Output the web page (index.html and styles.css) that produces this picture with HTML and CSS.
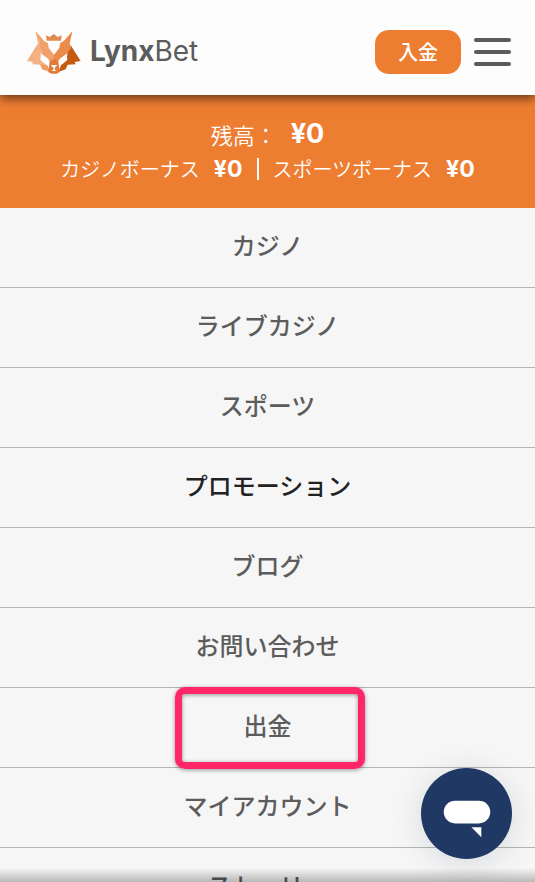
FILE: index.html
```html
<!DOCTYPE html>
<html lang="ja">
<head>
  <meta charset="UTF-8">
  <meta name="viewport" content="width=device-width, initial-scale=1.0">
  <title>LynxBet</title>
  <link rel="stylesheet" href="styles.css">
</head>
<body>
  <header class="header">
    <a class="logo" href="#">
      <svg class="logo-mark" viewBox="35 28 162 132" aria-hidden="true">
        <!-- crown -->
        <path fill="#e58a4e" d="M92 44l11 5 12-9 12 9 12-5-2 16H94z"/>
        <!-- cheeks -->
        <path fill="#f4b183" d="M64 74L35 121l18 3-3 7 24 1 6 14 22 8-8-20-19-16 2-19z"/>
        <path fill="#c55a11" d="M166 74l30 47-18 3 3 7-24 1-6 14-22 8 8-20 19-16-2-19z"/>
        <!-- ears and forehead -->
        <path fill="#f0a06a" d="M61 32l25 28 12 8 2 14 16 20v26l-14-8-24-21-13-16 4-14z"/>
        <path fill="#ea8a4b" d="M171 32l-25 28-12 8-2 14-16 20v26l14-8 24-21 13-16-4-14z"/>
        <path fill="#f4b183" d="M61 32l15 32-4 14 12 16-6 8-14-22 4-16z"/>
        <!-- eyes -->
        <path fill="#fdfdfd" d="M75 98l22 15 10 20-17-4-11-13z"/>
        <path fill="#fdfdfd" d="M157 98l-22 15-10 20 17-4 11-13z"/>
        <!-- muzzle -->
        <path fill="#ee9a61" d="M75 131l21 3 8 18-22-6z"/>
        <path fill="#e07c38" d="M103 122l13-7 13 7 4 32-9 5h-16l-9-5z"/>
        <path fill="#fdfdfd" d="M106 133h20l-8 8v6l6 4h-16l6-4v-6z"/>
      </svg>
      <span class="logo-text"><b>Lynx</b>Bet</span>
    </a>
    <button class="deposit" type="button">入金</button>
    <button class="menu-toggle" type="button" aria-label="メニュー">
      <span></span>
      <span></span>
      <span></span>
    </button>
  </header>

  <section class="balance">
    <p class="balance-main">残高：<b>¥0</b></p>
    <p class="balance-bonus">
      <span>カジノボーナス</span><b>¥0</b>
      <i class="divider"></i>
      <span>スポーツボーナス</span><b>¥0</b>
    </p>
  </section>

  <nav>
    <ul class="menu">
      <li><a href="#">カジノ</a></li>
      <li><a href="#">ライブカジノ</a></li>
      <li><a href="#">スポーツ</a></li>
      <li><a class="active" href="#">プロモーション</a></li>
      <li><a href="#">ブログ</a></li>
      <li><a href="#">お問い合わせ</a></li>
      <li class="marked"><a href="#">出金</a></li>
      <li><a href="#">マイアカウント</a></li>
      <li><a href="#">ストーリー</a></li>
    </ul>
  </nav>

  <div class="bottom-shade"></div>

  <button class="chat" type="button" aria-label="チャット">
    <svg viewBox="0 0 92 92" aria-hidden="true">
      <rect x="23" y="33" width="47" height="23" rx="11.5" fill="#fff"/>
      <path d="M51 60h10v10z" fill="#fff"/>
    </svg>
  </button>
</body>
</html>
```

FILE: styles.css
```css
*,
*::after {
  box-sizing: border-box;
}
body {
  margin: 0;
  height: 100vh;
  overflow: hidden;
  background: #f6f6f6;
  color: #5c5c5c;
  font-family: 'Noto Sans CJK JP', sans-serif;
}
button {
  border: none;
  padding: 0;
  font-family: inherit;
  cursor: pointer;
}
.header {
  position: relative;
  z-index: 1;
  display: flex;
  align-items: center;
  height: 95px;
  padding: 8px 24px 0 27px;
  background: #fdfdfd;
  box-shadow: 0 3px 10px rgba(0, 0, 0, 0.6);
}
.logo {
  display: flex;
  align-items: center;
  gap: 9px;
  margin-right: auto;
  color: #5c5c5c;
  text-decoration: none;
}
.logo-mark {
  width: 54px;
  height: 44px;
}
.logo-text {
  padding-bottom: 2px;
  font-family: Inter, sans-serif;
  font-size: 28px;
  line-height: 32px;
}
.deposit {
  width: 86px;
  height: 44px;
  border-radius: 14px;
  background: #ed7d31;
  color: #fff;
  font-size: 20px;
  font-weight: 500;
}
.menu-toggle {
  display: flex;
  flex-direction: column;
  gap: 8px;
  width: 37px;
  margin-left: 13px;
  background: none;
}
.menu-toggle span {
  height: 4px;
  border-radius: 2px;
  background: #5c5c5c;
}
.balance {
  display: flex;
  flex-direction: column;
  align-items: center;
  height: 113px;
  padding-top: 22px;
  background: #ed7d31;
  color: #fff;
  font-weight: 350;
}
.balance p {
  display: flex;
  align-items: center;
  margin: 0;
}
.balance b {
  font-family: Inter, sans-serif;
  font-weight: 700;
}
.balance-main {
  gap: 14px;
  font-size: 22px;
  line-height: 34px;
}
.balance-main b {
  font-size: 27px;
}
.balance-bonus {
  font-size: 20px;
  line-height: 36px;
}
.balance-bonus b {
  margin-left: 14px;
  font-size: 23px;
}
.divider {
  width: 2px;
  height: 22px;
  margin: 0 14px;
  background: #fff;
}
.menu {
  margin: 0;
  padding: 0;
  list-style: none;
}
.menu li {
  position: relative;
  border-bottom: 1px solid #b4b4b4;
}
.menu a {
  display: block;
  padding: 19px 0 24px;
  color: #5c5c5c;
  font-size: 24px;
  font-weight: 500;
  line-height: 36px;
  text-align: center;
  text-decoration: none;
}
.menu a.active {
  color: #222;
}
.marked::after {
  content: '';
  position: absolute;
  top: -1px;
  left: 50%;
  width: 190px;
  height: 82px;
  margin-left: -93px;
  border: 7px solid #ff2768;
  border-radius: 10px;
  box-shadow: 0 1px 4px rgba(0, 0, 0, 0.4), inset 0 1px 4px rgba(0, 0, 0, 0.4);
  pointer-events: none;
}
.bottom-shade {
  position: fixed;
  right: 0;
  bottom: 0;
  left: 0;
  height: 14px;
  background: linear-gradient(rgba(0, 0, 0, 0), rgba(0, 0, 0, 0.25));
}
.chat {
  position: fixed;
  right: 23px;
  bottom: 23px;
  width: 91px;
  height: 91px;
  border-radius: 50%;
  background: #203864;
  box-shadow: 0 4px 30px rgba(32, 56, 80, 0.15);
}
.chat svg {
  display: block;
}
```
